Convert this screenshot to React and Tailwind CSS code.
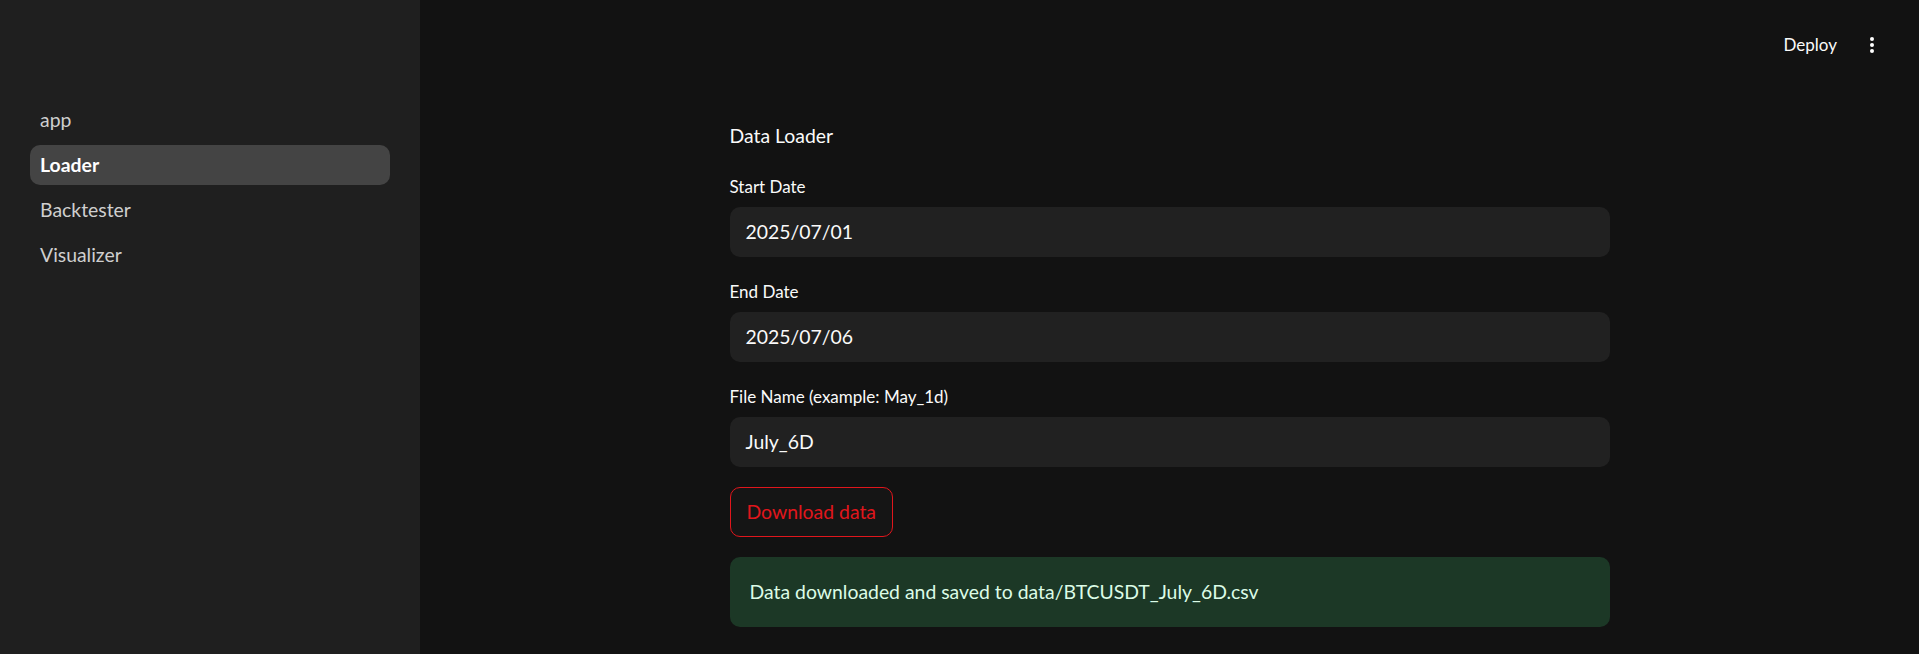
import React from 'react';

const NAV = [
  { label: 'app' },
  { label: 'Loader', active: true },
  { label: 'Backtester' },
  { label: 'Visualizer' },
];

const Field = ({ label, value }) => (
  <div className="flex flex-col">
    <div className="h-[30px] mb-[5px] flex items-center text-[17px] text-[#fafafa]">{label}</div>
    <div className="h-[50px] rounded-[10px] bg-[#212121] px-4 flex items-center text-[19.4px] text-[#fafafa]">
      {value}
    </div>
  </div>
);

const App = () => (
  <div
    className="flex w-full h-[654px] overflow-hidden bg-[#121212]"
    style={{ fontFamily: 'Lato, "Open Sans", sans-serif' }}
  >
    {/* sidebar */}
    <aside className="w-[420px] shrink-0 bg-[#1f1f1f] pt-[100px] px-[30px]">
      <nav className="flex flex-col gap-[5px]">
        {NAV.map((n) => (
          <div
            key={n.label}
            className={
              n.active
                ? 'h-[40px] rounded-[10px] bg-[#444444] px-[10px] flex items-center text-[19.4px] font-bold text-white'
                : 'h-[40px] rounded-[10px] px-[10px] flex items-center text-[19.4px] text-[#cfcfcf]'
            }
          >
            {n.label}
          </div>
        ))}
      </nav>
    </aside>

    {/* main */}
    <main className="flex-1 flex flex-col">
      <header className="h-[90px] flex justify-end items-start pt-[33px] pr-[45px] gap-[33px]">
        <span className="text-[17px] leading-[24px] text-[#fafafa]">Deploy</span>
        <div className="flex flex-col gap-[2px] pt-[4px]">
          <span className="w-[4px] h-[4px] rounded-full bg-white" />
          <span className="w-[4px] h-[4px] rounded-full bg-white" />
          <span className="w-[4px] h-[4px] rounded-full bg-white" />
        </div>
      </header>

      <div className="w-[880px] mx-auto mt-[30px] flex flex-col gap-5">
        <div className="h-[32px] flex items-center text-[19.4px] text-[#fafafa]">Data Loader</div>
        <Field label="Start Date" value="2025/07/01" />
        <Field label="End Date" value="2025/07/06" />
        <Field label="File Name (example: May_1d)" value="July_6D" />
        <div>
          <button className="h-[50px] px-4 rounded-[10px] border border-[#e0161c] bg-[#151515] text-[19.4px] text-[#e0161c]">
            Download data
          </button>
        </div>
        <div className="h-[70px] rounded-[10px] bg-[#1c3826] px-5 flex items-center text-[19.4px] text-[#dcfce7]">
          Data downloaded and saved to data/BTCUSDT_July_6D.csv
        </div>
      </div>
    </main>
  </div>
);

export default App;
